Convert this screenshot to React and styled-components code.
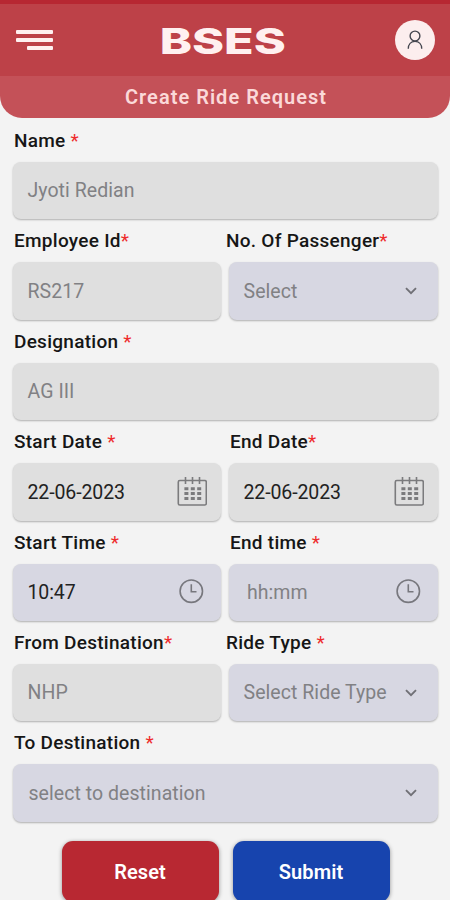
import styled, { createGlobalStyle } from "styled-components";

const GlobalStyle = createGlobalStyle`
    * {
        box-sizing: border-box;
    }

    body {
        margin: 0;
        background: #f3f3f3;
        font-family: Roboto, sans-serif;
        overflow: hidden;
    }
`;

const Screen = styled.div`
    width: 450px;
    height: 900px;
    overflow: hidden;
    background: #f3f3f3;
`;

const Header = styled.header`
    height: 118px;
    border-radius: 0 0 22px 22px;
    overflow: hidden;
    background: #c45158;
`;

const TopBar = styled.div`
    display: flex;
    align-items: center;
    justify-content: space-between;
    height: 76px;
    padding: 0 15px 0 16px;
    border-top: 4px solid #b72732;
    background: #bd4148;
`;

const MenuIcon = styled.svg`
    width: 52px;
    height: 20px;
    margin-right: -18px;
`;

const Logo = styled.h1`
    margin: 0;
    padding-top: 1px;
    color: #fff0f0;
    font-family: Inter, sans-serif;
    font-size: 36px;
    font-weight: 800;
    line-height: 40px;
    white-space: nowrap;
    transform: scaleX(1.35);
`;

const Avatar = styled.div`
    display: flex;
    align-items: center;
    justify-content: center;
    width: 40px;
    height: 40px;
    border-radius: 50%;
    background: #fceeee;
`;

const Title = styled.h2`
    margin: 0;
    height: 42px;
    padding-left: 2px;
    color: #fbd9d9;
    font-size: 20px;
    font-weight: 600;
    line-height: 43px;
    letter-spacing: 1.02px;
    text-align: center;
`;

const Form = styled.div`
    padding: 1px 12px 0 13px;
`;

const Row = styled.div`
    display: grid;
    grid-template-columns: ${({ $split }) => ($split ? "208px 209px" : "1fr")};
    column-gap: 8px;
`;

const Label = styled.div`
    height: 43px;
    padding-left: 1px;
    margin-left: ${({ $shift }) => $shift || 0}px;
    color: #161616;
    font-size: 19px;
    font-weight: 500;
    line-height: 44.4px;
    letter-spacing: 0.27px;
    white-space: pre;
`;

const Star = styled.span`
    color: #ee2b2b;
    font-weight: 400;
`;

const Input = styled.div`
    display: flex;
    align-items: center;
    justify-content: space-between;
    height: 57.4px;
    padding: 0 ${({ $right }) => $right || 14}px 0 ${({ $left }) => $left || 14.5}px;
    border-radius: 8px;
    background: ${({ $active }) => ($active ? "#d7d7e2" : "#dfdfdf")};
    box-shadow: 0 1px 2px rgba(0, 0, 0, 0.28);
`;

const Value = styled.span`
    padding-top: 0.5px;
    color: ${({ $filled }) => ($filled ? "#222" : "#818184")};
    font-size: 19.5px;
    letter-spacing: ${({ $filled }) => ($filled ? -0.1 : 0.05)}px;
    white-space: nowrap;
`;

const Buttons = styled.div`
    display: flex;
    gap: 14px;
    padding: 19.5px 0 0 49px;
`;

const Button = styled.button`
    width: 157px;
    height: 61px;
    padding: 0 1px 0 0;
    border: 0;
    border-radius: 11px;
    background: ${({ $color }) => $color};
    box-shadow: 0 1px 4px rgba(0, 0, 0, 0.4);
    color: #fff;
    font-family: inherit;
    font-size: 20px;
    font-weight: 600;
    letter-spacing: 0.1px;
`;

const UserIcon = () => (
    <svg width="16" height="20" viewBox="0 0 16 20" fill="none" stroke="#44464f" strokeWidth="1.4">
        <circle cx="8" cy="6" r="4.9" />
        <path d="M1.3 18.8c0-4.4 2.7-7.4 6.7-7.4s6.7 3 6.7 7.4" />
    </svg>
);

const CalendarIcon = () => (
    <svg width="30" height="30" viewBox="0 0 30 30" fill="none" stroke="#7b7b7d" strokeWidth="1.6">
        <rect x="1.3" y="3.5" width="28" height="24.5" rx="1.5" />
        <path d="M8.5 0v7M15.5 0v7M22.5 0v7" />
        <path strokeWidth="3" strokeDasharray="4 2.4" d="M7.4 11.8h16.8M7.4 16.6h16.8M7.4 21.4h16.8" />
    </svg>
);

const ClockIcon = () => (
    <svg width="26" height="26" viewBox="0 0 26 26" fill="none" stroke="#77777d" strokeWidth="1.6">
        <circle cx="13.3" cy="12.2" r="11.2" />
        <path d="M13.3 5.2v7.6h5.2" />
    </svg>
);

const ChevronIcon = () => (
    <svg width="12" height="8" viewBox="0 0 12 8" fill="none" stroke="#707076" strokeWidth="1.9">
        <path d="M1 1.2l5 5 5-5" />
    </svg>
);

const icons = {
    calendar: CalendarIcon,
    clock: ClockIcon,
    chevron: ChevronIcon,
};

const iconPadding = { calendar: 14, clock: 17, chevron: 21 };

const rows = [
    [{ label: "Name ", value: "Jyoti Redian" }],
    [
        { label: "Employee Id", value: "RS217" },
        { label: "No. Of Passenger", value: "Select", icon: "chevron", active: true, shift: -4 },
    ],
    [{ label: "Designation ", value: "AG III" }],
    [
        { label: "Start Date ", value: "22-06-2023", icon: "calendar", filled: true },
        { label: "End Date", value: "22-06-2023", icon: "calendar", filled: true },
    ],
    [
        { label: "Start Time ", value: "10:47", icon: "clock", active: true, filled: true },
        { label: "End time ", value: "hh:mm", icon: "clock", active: true, left: 18 },
    ],
    [
        { label: "From Destination", value: "NHP" },
        { label: "Ride Type ", value: "Select Ride Type", icon: "chevron", active: true, shift: -4 },
    ],
    [{ label: "To Destination ", value: "select to destination", icon: "chevron", active: true, left: 15.5 }],
];

const Field = ({ label, value, icon, active, filled, shift, left }) => {
    const Icon = icons[icon];
    return (
        <div>
            <Label $shift={shift}>{label}<Star>*</Star></Label>
            <Input $active={active} $left={left} $right={iconPadding[icon]}>
                <Value $filled={filled}>{value}</Value>
                {Icon && <Icon />}
            </Input>
        </div>
    );
};

const App = () => {
    return (
        <Screen>
            <GlobalStyle />
            <Header>
                <TopBar>
                    <MenuIcon viewBox="0 0 52 20" fill="#fff0f0">
                        <rect x="0" y="0" width="37" height="4" rx="1" />
                        <rect x="0" y="8" width="37" height="4" rx="1" />
                        <rect x="11" y="16" width="26" height="4" rx="1" />
                    </MenuIcon>
                    <Logo>BSES</Logo>
                    <Avatar><UserIcon /></Avatar>
                </TopBar>
                <Title>Create Ride Request</Title>
            </Header>
            <Form>
                {rows.map((fields) => (
                    <Row key={fields[0].label} $split={fields.length > 1}>
                        {fields.map((field) => <Field key={field.label} {...field} />)}
                    </Row>
                ))}
                <Buttons>
                    <Button $color="#b82832">Reset</Button>
                    <Button $color="#1744ae">Submit</Button>
                </Buttons>
            </Form>
        </Screen>
    );
};

export default App;
